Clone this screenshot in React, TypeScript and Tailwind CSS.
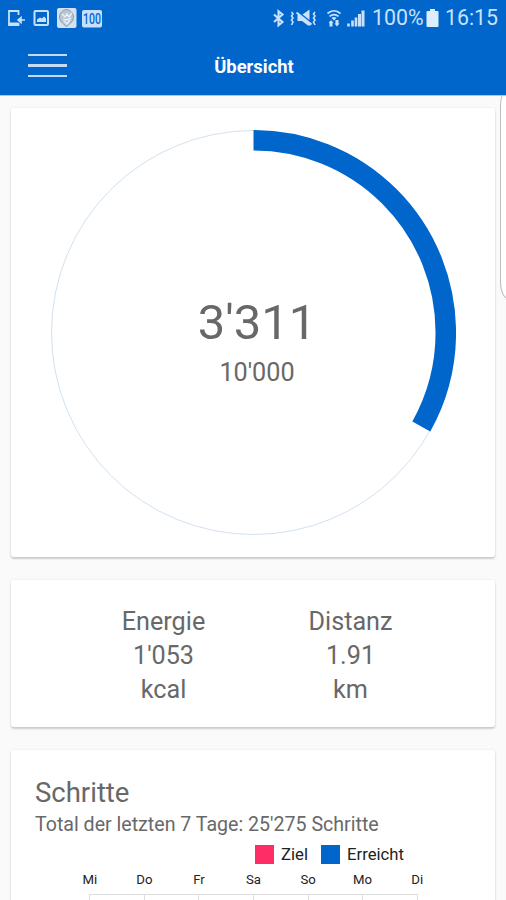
import React from "react";

const DAYS = ["Mi", "Do", "Fr", "Sa", "So", "Mo", "Di"];

const steps = 3311;
const goal = 10000;

const StatusBar = () => {
  return (
    <div className="flex h-[36px] items-center justify-between pl-[7px] pr-[7px] text-[#c9e1fb]">
      <svg width="100" height="24" viewBox="7 5 100 24" fill="none" stroke="currentColor">
        {/* phone with arrow */}
        <path d="M18.5 14V10h-9.5v14h9.5v-2" strokeWidth="1.8" />
        <path d="M9 23h9.500" strokeWidth="3" />
        <path d="M25 19h-6M21 16.500l-3 2.500 3 2.500z" strokeWidth="1.6" fill="currentColor" />
        {/* picture */}
        <rect x="34.5" y="10" width="13.5" height="14" rx="1" strokeWidth="2" />
        <path d="M37 21v-2.500l3-2 2 1 2-2 2 2V21z" fill="currentColor" stroke="none" />
        {/* app badge */}
        <rect x="57" y="7" width="19.5" height="20" rx="2" fill="#d3e1f1" stroke="none" />
        <path d="M66.500 8.500c4 .5 7 3.500 7 8 0 3-3 6-7 9-4-3-7-6-7-9 0-4.500 3-7.500 7-8z" fill="#b9c6d3" stroke="#8d9aa8" />
        <path d="M62 13l3 3 2-3 2 3 3-4M63 18c2 1 5 1 8-1M64 20l3 3 3-4" stroke="#edf4fb" strokeWidth="1.300" />
        {/* 100 badge */}
        <rect x="82" y="9" width="20" height="17.500" rx="2" fill="#c5e0fc" stroke="none" />
        <text
          x="92"
          y="23"
          textAnchor="middle"
          textLength="18"
          lengthAdjust="spacingAndGlyphs"
          fontSize="14"
          fontWeight="500"
          fill="#0766d0"
          stroke="none"
        >
          100
        </text>
      </svg>

      <div className="flex h-[24px] items-center">
        <svg width="100" height="24" viewBox="270 5 100 24" fill="none" stroke="currentColor">
          {/* bluetooth */}
          <path d="M274 13.500l8.500 7.500-4 3.300V10.200l4 3.300-8.500 7.500" strokeWidth="2.100" />
          {/* muted, vibrating */}
          <path
            d="M291.500 11l1.500 2-1.500 2 1.500 2-1.500 2 1.500 2-1.500 3M315 11l-1.500 2 1.500 2-1.500 2 1.500 2-1.500 2 1.500 3"
            strokeWidth="1.600"
          />
          <path d="M297.500 14v6h4.500l6 4.500h2.500v-1.500l-11-9zM302.500 13.500l7-5v10.500z" fill="currentColor" stroke="none" />
          <path d="M296.500 11.500l15 12" strokeWidth="2" />
          {/* wifi */}
          <path d="M327.500 12.500c4-3.500 9-3.500 13 0M329.500 15.300c3-2.300 6-2.300 9 0" strokeWidth="1.700" />
          <path d="M331.500 17c1.500-1.200 3.500-1.200 5 0l-2.500 2.500z" fill="currentColor" stroke="none" />
          <path
            d="M328.500 22l2.500-3 2.500 3h-1v3.500h-3V22zM334.500 22.500l2.500 3 2.500-3h-1V19h-3v3.500z"
            fill="currentColor"
            stroke="none"
          />
          {/* signal */}
          <path d="M348.500 22.500v3M352.500 19.500v6M356 16.500v9" strokeWidth="2.600" />
          <path d="M359.500 13v12.500M363 9.500v16" strokeWidth="3" />
        </svg>
        <span className="ml-[2px] w-[52px] text-[21.300px] leading-none whitespace-nowrap">100%</span>
        <svg className="ml-[2px]" width="13" height="20" viewBox="0 0 13 20" fill="#deedfd">
          <path d="M4 1h5v2h2.500q1 0 1 1v14q0 1-1 1h-10q-1 0-1-1V4q0-1 1-1H4z" />
        </svg>
        <span className="ml-[6px] w-[54px] text-[21.300px] leading-none">16:15</span>
      </div>
    </div>
  );
};

const Header = () => {
  return (
    <header className="h-[96px] border-b border-[#a6c9ee] bg-[#0066cc]">
      <StatusBar />
      <div className="grid h-[59px] grid-cols-3 items-center px-[28px]">
        <button className="flex w-[39px] flex-col gap-[8px]" aria-label="Menu">
          <span className="h-[2.500px] w-full bg-[#c4daf5]" />
          <span className="h-[2.500px] w-full bg-[#c4daf5]" />
          <span className="h-[2.500px] w-full bg-[#c4daf5]" />
        </button>
        <h1 className="pt-[2px] pl-[2px] text-center text-[18.400px] font-bold text-white">Übersicht</h1>
      </div>
    </header>
  );
};

const Card = ({ className, children }: { className: string; children: React.ReactNode }) => {
  return (
    <section className={`rounded-[3px] bg-white shadow-[0_2px_2px_rgba(0,0,0,0.17),0_0_3px_rgba(0,0,0,0.08)] ${className}`}>
      {children}
    </section>
  );
};

const StepRing = () => {
  const radius = 192.3;
  const length = 2 * Math.PI * radius;

  return (
    <div className="grid place-items-center">
      <svg className="col-start-1 row-start-1" width="406" height="406" viewBox="0 0 406 406" fill="none">
        <circle cx="203.500" cy="203.500" r="202" stroke="#d2e1f1" strokeWidth="1" />
        <circle
          cx="203.500"
          cy="203.500"
          r={radius}
          stroke="#0066cc"
          strokeWidth="20.500"
          strokeDasharray={`${(steps / goal) * length} ${length}`}
          transform="rotate(-90 203.500 203.500)"
        />
      </svg>
      <div className="col-start-1 row-start-1 flex flex-col items-center pt-[20px] pl-[8px]">
        <span className="text-[49px] leading-[56px]">3'311</span>
        <span className="mt-[6px] text-[25.200px] leading-[32px]">10'000</span>
      </div>
    </div>
  );
};

const Stat = ({ label, value, unit }: { label: string; value: string; unit: string }) => {
  return (
    <div className="flex w-[187px] flex-col items-center text-[25.200px] leading-[34px]">
      <span>{label}</span>
      <span>{value}</span>
      <span>{unit}</span>
    </div>
  );
};

const StepsChart = () => {
  return (
    <div className="text-[#222]">
      <div className="flex items-center pl-[220px] text-[16.700px] leading-[20px]">
        <span className="h-[19px] w-[19px] bg-[#ff2d66]" />
        <span className="ml-[7px] w-[28px] pt-px">Ziel</span>
        <span className="ml-[12px] h-[19px] w-[19px] bg-[#0066cc]" />
        <span className="ml-[7px] pt-px">Erreicht</span>
      </div>
      <div className="mt-[7px] ml-[27.500px] grid w-[382px] grid-cols-7 text-center text-[13.200px] leading-[16px]">
        {DAYS.map((day) => (
          <span key={day}>{day}</span>
        ))}
      </div>
      <div className="mt-[6px] ml-[54px] grid h-[80px] w-[329px] grid-cols-6 border-t border-l border-[#dedede]">
        {DAYS.slice(1).map((day) => (
          <div key={day} className="border-r border-[#dedede]" />
        ))}
      </div>
    </div>
  );
};

const App = () => {
  return (
    <div className="relative h-[900px] w-[506px] overflow-hidden bg-[#fafafa] font-['Roboto',sans-serif] text-[#686868]">
      <Header />
      <main className="flex flex-col gap-[23px] px-[11px] pt-[12px]">
        <Card className="h-[449px] pt-[21px]">
          <StepRing />
        </Card>
        <Card className="flex h-[147px] justify-center pt-[25px] pl-[8px]">
          <Stat label="Energie" value="1'053" unit="kcal" />
          <Stat label="Distanz" value="1.91" unit="km" />
        </Card>
        <Card className="h-[260px] px-[24px] pt-[26px]">
          <h2 className="text-[27.500px] leading-[34px]">Schritte</h2>
          <p className="pt-px text-[19.600px] leading-[28px]">Total der letzten 7 Tage: 25'275 Schritte</p>
          <div className="mt-[5px]">
            <StepsChart />
          </div>
        </Card>
      </main>
      {/* edge panel handle */}
      <div className="absolute top-[88px] -right-[14px] h-[212px] w-[20px] rounded-[14px/24px] border border-[#bdbdbd] bg-white [clip-path:inset(8px_0_0_0)]" />
    </div>
  );
};

export default App;
